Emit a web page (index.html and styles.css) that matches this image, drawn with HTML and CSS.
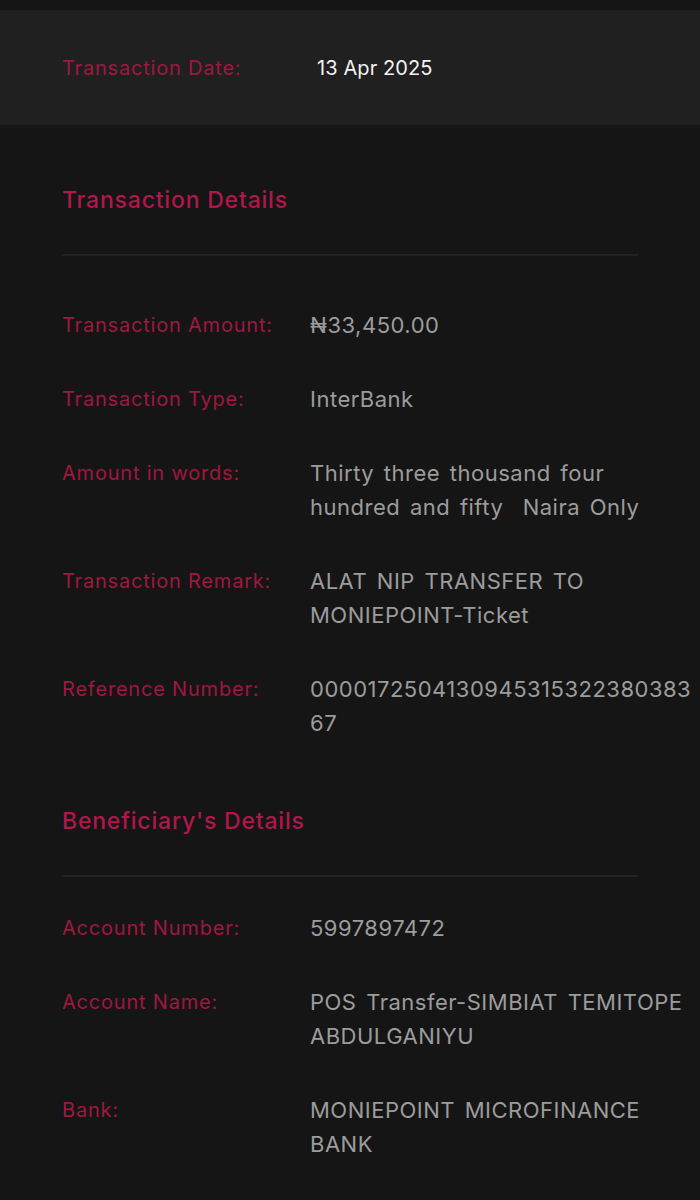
FILE: index.html
```html
<!DOCTYPE html>
<html lang="en">
<head>
<meta charset="utf-8">
<title>Transaction Receipt</title>
<link rel="stylesheet" href="styles.css">
</head>
<body>
<div class="band">
  <span class="band-label">Transaction Date:</span>
  <span class="band-value">13 Apr 2025</span>
</div>

<section class="section">
  <h2 class="heading">Transaction Details</h2>
  <div class="divider"></div>
  <div class="rows rows-first">
    <div class="row"><span class="label">Transaction Amount:</span><span class="value">₦33,450.00</span></div>
    <div class="row"><span class="label">Transaction Type:</span><span class="value">InterBank</span></div>
    <div class="row"><span class="label">Amount in words:</span><span class="value">Thirty three thousand four hundred and fifty&nbsp; Naira Only</span></div>
    <div class="row"><span class="label">Transaction Remark:</span><span class="value">ALAT NIP TRANSFER TO MONIEPOINT-Ticket</span></div>
    <div class="row"><span class="label">Reference Number:</span><span class="value break">000017250413094531532238038367</span></div>
  </div>
</section>

<section class="section section-second">
  <h2 class="heading">Beneficiary's Details</h2>
  <div class="divider"></div>
  <div class="rows rows-second">
    <div class="row"><span class="label">Account Number:</span><span class="value">5997897472</span></div>
    <div class="row"><span class="label">Account Name:</span><span class="value">POS Transfer-SIMBIAT TEMITOPE ABDULGANIYU</span></div>
    <div class="row"><span class="label">Bank:</span><span class="value">MONIEPOINT MICROFINANCE BANK</span></div>
  </div>
</section>
</body>
</html>
```

FILE: styles.css
```css
html, body {
  margin: 0;
  padding: 0;
  background: #151515;
}
body {
  font-family: "Inter", "Open Sans", sans-serif;
  width: 700px;
  height: 1200px;
  overflow: hidden;
  padding-top: 10px;
  box-sizing: border-box;
  background: #151515;
}
.band {
  height: 115px;
  background: #202020;
  display: flex;
  align-items: center;
  padding-left: 62px;
}
.band-label {
  width: 255px;
  color: #a0173f;
  font-size: 20px;
  font-weight: 400;
  letter-spacing: 0.8px;
}
.band-value {
  color: #f2f2f2;
  font-size: 20px;
  font-weight: 400;
  letter-spacing: 0.1px;
}
.section {
  padding-left: 62px;
}
.heading {
  margin: 60px 0 0;
  font-size: 23px;
  line-height: 30px;
  font-weight: 500;
  letter-spacing: 0.8px;
  color: #b0174a;
}
.section-second .heading {
  margin-top: 66px;
}
.divider {
  margin-top: 39px;
  width: 576px;
  height: 2px;
  background: #232323;
}
.rows {
  display: flex;
  flex-direction: column;
  gap: 40px;
}
.rows-first {
  padding-top: 52px;
}
.rows-second {
  padding-top: 34px;
}
.row {
  display: grid;
  grid-template-columns: 248px 390px;
  line-height: 34px;
}
.label {
  color: #a0173f;
  font-size: 20px;
  font-weight: 400;
  letter-spacing: 0.8px;
}
.value {
  color: #9c9c9c;
  font-size: 22px;
  font-weight: 400;
  letter-spacing: 0.5px;
  word-spacing: 3px;
}
.break {
  word-break: break-all;
}
```
